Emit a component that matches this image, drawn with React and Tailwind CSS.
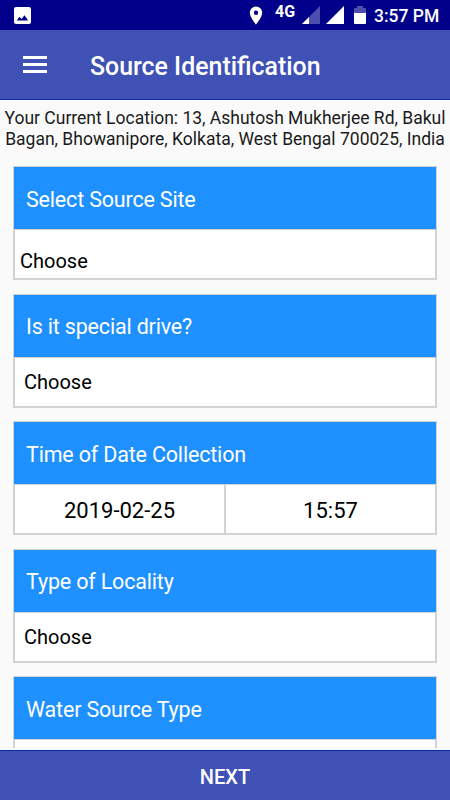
import React from 'react';

function StatusBar() {
  return (
    <div className="flex h-[30px] shrink-0 items-center bg-[#00008b] pr-[11px] pl-[14px] text-white">
      <svg className="h-[17px] w-[17px]" viewBox="0 0 17 17">
        <rect width="17" height="17" rx="2" fill="white" />
        <path d="M2.8 13.4 5.5 9.8 7.5 12 10.5 8.3 14.2 13.4Z" fill="#00008b" />
      </svg>
      <svg className="ml-auto h-[19px] w-[14px]" viewBox="0 0 14 19">
        <path
          fillRule="evenodd"
          fill="white"
          d="M7 .5A6.2 6.2 0 0 0 .8 6.7C.8 11.2 7 18.5 7 18.5s6.2-7.3 6.2-11.8A6.2 6.2 0 0 0 7 .5Zm0 4a2.2 2.2 0 1 1 0 4.4 2.2 2.2 0 0 1 0-4.4Z"
        />
      </svg>
      <span className="mb-[7px] ml-[12px] w-[22px] text-[16px] leading-none font-bold">4G</span>
      <svg className="ml-[5px] h-[18px] w-[18px]" viewBox="0 0 18 18">
        <path d="M0 18 18 0V18Z" fill="#4d4dae" />
        <path d="M0 18 7 11V18Z" fill="white" />
      </svg>
      <svg className="ml-[6px] h-[18px] w-[18px]" viewBox="0 0 18 18">
        <path d="M0 18 18 0V18Z" fill="white" />
      </svg>
      <svg className="ml-[10px] h-[18px] w-[12px]" viewBox="0 0 12 18">
        <path d="M0 2H3V0H9V2H12V7H0Z" fill="#4d4dae" />
        <path d="M0 7H12V17Q12 18 11 18H1Q0 18 0 17Z" fill="white" />
      </svg>
      <span className="mt-[2px] ml-[8px] w-[65px] text-[17.5px] font-medium whitespace-nowrap">3:57 PM</span>
    </div>
  );
}

function Header() {
  return (
    <header className="flex h-[70px] shrink-0 items-center border-b border-[#0a2a9e] bg-[#3f51b5] pl-[23px] text-white">
      <button className="flex w-6 flex-col gap-1">
        <span className="h-[3px] bg-white" />
        <span className="h-[3px] bg-white" />
        <span className="h-[3px] bg-white" />
      </button>
      <h1 className="mt-[5px] ml-[43px] text-[24.9px] font-medium whitespace-nowrap">Source Identification</h1>
    </header>
  );
}

function Card({ title, children }) {
  return (
    <section className="flex h-[114px] shrink-0 flex-col border border-[#d3d3d3]">
      <h2 className="flex h-[62px] shrink-0 items-center bg-[#1e90ff] pt-[4px] pl-[12px] text-[21.5px] tracking-[-0.18px] text-white">
        {title}
      </h2>
      <div className="flex flex-1 border border-[#d3d3d3] bg-white text-black">{children}</div>
    </section>
  );
}

function App() {
  return (
    <div className="flex h-[800px] w-[450px] flex-col overflow-hidden bg-[#fafafa] font-['Roboto',sans-serif]">
      <StatusBar />
      <Header />
      <main className="h-[648px] shrink-0 overflow-hidden">
        <p className="pt-2 text-center text-[17.5px] leading-[21px] whitespace-nowrap text-[#1a1a1a]">
          Your Current Location: 13, Ashutosh Mukherjee Rd, Bakul
          <br />
          Bagan, Bhowanipore, Kolkata, West Bengal 700025, India
        </p>
        <div className="mt-4 flex flex-col gap-[13.5px] px-[13px]">
          <Card title="Select Source Site">
            <span className="mt-[17px] pl-[5px] text-[20px] leading-7">Choose</span>
          </Card>
          <Card title="Is it special drive?">
            <span className="mt-[10px] pl-[9px] text-[20px] leading-7">Choose</span>
          </Card>
          <Card title="Time of Date Collection">
            <span className="flex flex-1 items-center justify-center pt-[2px] text-[22px]">2019-02-25</span>
            <span className="flex flex-1 items-center justify-center border-l-2 border-[#d3d3d3] pt-[2px] text-[22px]">
              15:57
            </span>
          </Card>
          <Card title="Type of Locality">
            <span className="mt-[10px] pl-[9px] text-[20px] leading-7">Choose</span>
          </Card>
          <Card title="Water Source Type" />
        </div>
      </main>
      <button className="mt-[2px] flex h-[50px] shrink-0 items-center justify-center border-t border-[#0a2a9e] bg-[#3f51b5] pt-[3px] text-[20px] font-medium text-white">
        NEXT
      </button>
    </div>
  );
}

export default App;
